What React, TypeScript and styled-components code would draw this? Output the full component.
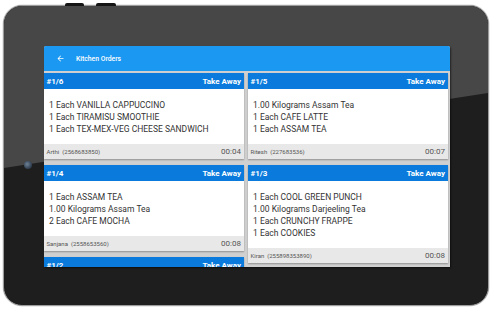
import styled, { createGlobalStyle } from "styled-components";

interface Order {
  id: string;
  type: string;
  items: string[];
  customer: string;
  phone: string;
  elapsed: string;
}

const orders: Order[] = [
  {
    id: "#1/6",
    type: "Take Away",
    items: ["1 Each VANILLA CAPPUCCINO", "1 Each TIRAMISU SMOOTHIE", "1 Each TEX-MEX-VEG CHEESE SANDWICH"],
    customer: "Arthi",
    phone: "2568683850",
    elapsed: "00:04",
  },
  {
    id: "#1/5",
    type: "Take Away",
    items: ["1.00 Kilograms Assam Tea", "1 Each CAFE LATTE", "1 Each ASSAM TEA"],
    customer: "Ritesh",
    phone: "227683536",
    elapsed: "00:07",
  },
  {
    id: "#1/4",
    type: "Take Away",
    items: ["1 Each ASSAM TEA", "1.00 Kilograms Assam Tea", "2 Each CAFE MOCHA"],
    customer: "Sanjana",
    phone: "2558653560",
    elapsed: "00:08",
  },
  {
    id: "#1/3",
    type: "Take Away",
    items: ["1 Each COOL GREEN PUNCH", "1.00 Kilograms Darjeeling Tea", "1 Each CRUNCHY FRAPPE", "1 Each COOKIES"],
    customer: "Kiran",
    phone: "255898353890",
    elapsed: "00:08",
  },
  {
    id: "#1/2",
    type: "Take Away",
    items: [],
    customer: "",
    phone: "",
    elapsed: "",
  },
];

const OrderCard: React.FC<{ order: Order }> = ({ order }) => (
  <Card>
    <CardHeader>
      <span>{order.id}</span>
      <span>{order.type}</span>
    </CardHeader>
    {order.items.length > 0 && (
      <>
        <CardBody>
          {order.items.map((item) => (
            <Item key={item}>{item}</Item>
          ))}
        </CardBody>
        <CardFooter>
          <Customer>
            {order.customer}&nbsp;&nbsp;({order.phone})
          </Customer>
          <Elapsed>{order.elapsed}</Elapsed>
        </CardFooter>
      </>
    )}
  </Card>
);

const App = () => {
  const left = orders.filter((_, i) => i % 2 === 0);
  const right = orders.filter((_, i) => i % 2 === 1);

  return (
    <>
      <GlobalStyle />
      <Page>
        <Tablet>
          <SideButton $left={61} $width={19} />
          <SideButton $left={92} $width={20} />
          <Camera />
          <Screen>
            <AppBar>
              <svg width="9" height="9" viewBox="0 0 24 24" fill="#fff">
                <path d="M20 11H7.83l5.59-5.59L12 4l-8 8 8 8 1.41-1.41L7.83 13H20v-2z" />
              </svg>
              <Title>Kitchen Orders</Title>
            </AppBar>
            <Board>
              <Column>
                {left.map((o) => (
                  <OrderCard key={o.id} order={o} />
                ))}
              </Column>
              <Column>
                {right.map((o) => (
                  <OrderCard key={o.id} order={o} />
                ))}
              </Column>
            </Board>
          </Screen>
        </Tablet>
      </Page>
    </>
  );
};

export default App;

const GlobalStyle = createGlobalStyle`
  body {
    margin: 0;
    background: #ffffff;
    font-family: Roboto, "Liberation Sans", sans-serif;
  }
`;

const Page = styled.div`
  width: 492px;
  height: 310px;
  padding: 5px 3px 4px;
  box-sizing: border-box;
`;

const Tablet = styled.div`
  position: relative;
  width: 486px;
  height: 301px;
  box-sizing: border-box;
  padding: 40px 40px 0;
  border-radius: 19px;
  background: #1e1e1e;
  border: 1px solid #9c9c9c;
  box-shadow: 0 0 0 0.5px #d8d8d8;

  &::before {
    content: "";
    position: absolute;
    inset: 0;
    border-radius: 18px;
    background: #474747;
    clip-path: polygon(0 0, 100% 0, 100% 87px, 0 162px);
  }
`;

const SideButton = styled.div<{ $left: number; $width: number }>`
  position: absolute;
  top: -3px;
  left: ${(p) => p.$left}px;
  width: ${(p) => p.$width}px;
  height: 3px;
  border-radius: 2px 2px 0 0;
  background: #151515;
  z-index: 2;
`;

const Camera = styled.div`
  position: absolute;
  left: 20px;
  top: 155px;
  width: 8px;
  height: 8px;
  border-radius: 50%;
  background: radial-gradient(circle at 40% 40%, #6f8296 0%, #3a4a5c 55%, #1d2630 100%);
  z-index: 1;
`;

const Screen = styled.div`
  position: relative;
  z-index: 1;
  width: 406px;
  height: 221px;
  display: flex;
  flex-direction: column;
  background: #d0d0d0;
  border-radius: 2px 2px 0 0;
  overflow: hidden;
  box-shadow: 1px 1px 2px rgba(0, 0, 0, 0.5);
`;

const AppBar = styled.div`
  flex: none;
  height: 25px;
  display: flex;
  align-items: center;
  gap: 11px;
  padding-left: 12px;
  background: #1a98f2;
  color: #fff;
`;

const Title = styled.span`
  font-size: 6.8px;
  font-weight: 500;
`;

const Board = styled.div`
  display: flex;
  gap: 4px;
  padding: 2px 2px 0 0;
`;

const Column = styled.div`
  flex: 1;
  display: flex;
  flex-direction: column;
  gap: 6px;
`;

const Card = styled.div`
  display: flex;
  flex-direction: column;
  background: #fff;
  box-shadow: 0 1px 1.5px rgba(0, 0, 0, 0.3);
`;

const CardHeader = styled.div`
  height: 16px;
  display: flex;
  align-items: center;
  justify-content: space-between;
  padding: 0 3px 0 2.5px;
  background: #0a7bdc;
  color: #fff;
  font-size: 8px;
  font-weight: 700;
`;

const CardBody = styled.div`
  display: flex;
  flex-direction: column;
  padding: 10px 5px 8.5px;
`;

const Item = styled.div`
  font-size: 8.5px;
  line-height: 12px;
  color: #333;
  white-space: nowrap;
`;

const CardFooter = styled.div`
  height: 15.5px;
  display: flex;
  align-items: center;
  justify-content: space-between;
  padding: 0 3px 0 2.5px;
  background: #e8e8e8;
  color: #555;
`;

const Customer = styled.span`
  font-size: 6px;
  padding-top: 1px;
`;

const Elapsed = styled.span`
  font-size: 8px;
`;
